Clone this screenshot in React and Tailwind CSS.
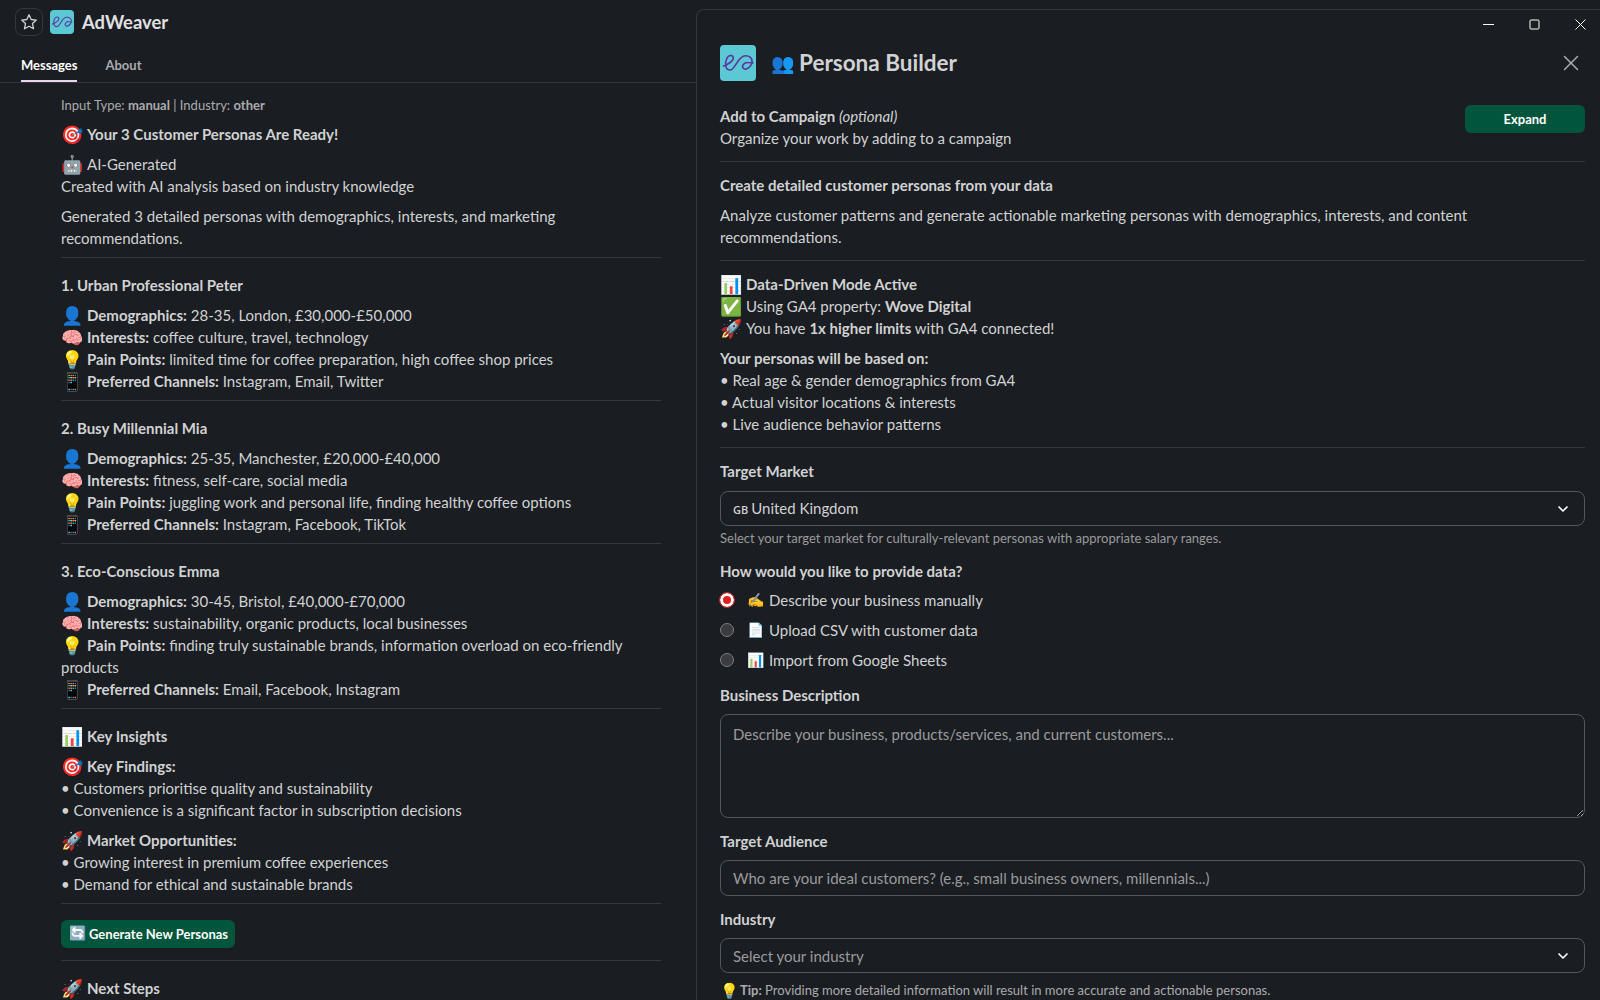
import React from 'react';
import { X, ChevronDown } from 'lucide-react';

function Logo({ className }) {
    return (
        <div className={`bg-[#5cc8d4] flex items-center justify-center shrink-0 ${className}`}>
            <svg viewBox="0 0 36 36" className="w-full h-full" fill="none" stroke="#5a35a0" strokeWidth="1.6" strokeLinecap="round">
                <path d="M3.500 21C7 20 13.500 16 13.300 13C13 10 9 9.500 7 13C5 17 4.500 25 10 25C15 25 17 13 24 11C29 10 32.500 13 32 17C31.500 22 26 25.500 23.500 23.500C21 21.500 24 17 28 17.500L33 18" />
            </svg>
        </div>
    );
}

function Emoji({ children }) {
    return <span className="inline-block w-[26px] h-[22px] align-top text-[18px] leading-[22px]">{children}</span>;
}

function Divider({ className = 'mt-2 mb-4' }) {
    return <div className={`h-px bg-[#35373b] ${className}`} />;
}

function Persona({ title, demographics, interests, pain, channels }) {
    return (
        <div>
            <p className="font-bold mb-2">{title}</p>
            <p><Emoji>👤</Emoji><b>Demographics:</b> {demographics}</p>
            <p><Emoji>🧠</Emoji><b>Interests:</b> {interests}</p>
            <p><Emoji>💡</Emoji><b>Pain Points:</b> {pain}</p>
            <p><Emoji>📱</Emoji><b>Preferred Channels:</b> {channels}</p>
            <Divider />
        </div>
    );
}

const personas = [
    {
        title: '1. Urban Professional Peter',
        demographics: '28-35, London, £30,000-£50,000',
        interests: 'coffee culture, travel, technology',
        pain: 'limited time for coffee preparation, high coffee shop prices',
        channels: 'Instagram, Email, Twitter',
    },
    {
        title: '2. Busy Millennial Mia',
        demographics: '25-35, Manchester, £20,000-£40,000',
        interests: 'fitness, self-care, social media',
        pain: 'juggling work and personal life, finding healthy coffee options',
        channels: 'Instagram, Facebook, TikTok',
    },
    {
        title: '3. Eco-Conscious Emma',
        demographics: '30-45, Bristol, £40,000-£70,000',
        interests: 'sustainability, organic products, local businesses',
        pain: 'finding truly sustainable brands, information overload on eco-friendly products',
        channels: 'Email, Facebook, Instagram',
    },
];

function Messages() {
    return (
        <div className="w-[696px] shrink-0 flex flex-col">
            {/* Header */}
            <div className="h-[44px] shrink-0 flex items-center pl-[15px]">
                <button className="w-[28px] h-[28px] rounded-lg border border-[#35373b] flex items-center justify-center text-[#d1d2d3]">
                    <Star />
                </button>
                <Logo className="w-[24px] h-[24px] rounded ml-[7px]" />
                <span className="ml-2 text-[18.4px] font-bold text-[#e0e0e1]">AdWeaver</span>
            </div>
            <div className="h-[39px] shrink-0 flex items-end gap-7 pl-[21px] border-b border-[#35373b] text-[13px] font-bold">
                <div className="h-[39px] flex items-center pt-[7px] text-white border-b-2 border-[#e8d5ee]">Messages</div>
                <div className="h-[39px] flex items-center pt-[5px] text-[#ababad]">About</div>
            </div>

            {/* Message body */}
            <div className="pl-[61px] pr-[35px] pt-[12px]">
                <p className="text-[13px] leading-[20px] text-[#ababad] mb-[8px]">Input Type: <b>manual</b> | Industry: <b>other</b></p>
                <p className="font-bold mb-2"><Emoji>🎯</Emoji>Your 3 Customer Personas Are Ready!</p>
                <p><Emoji>🤖</Emoji>AI-Generated</p>
                <p className="mb-2">Created with AI analysis based on industry knowledge</p>
                <p>Generated 3 detailed personas with demographics, interests, and marketing recommendations.</p>
                <Divider />
                {personas.map((p) => <Persona key={p.title} {...p} />)}
                <p className="font-bold mb-2"><Emoji>📊</Emoji>Key Insights</p>
                <p className="font-bold"><Emoji>🎯</Emoji>Key Findings:</p>
                <p>• Customers prioritise quality and sustainability</p>
                <p className="mb-2">• Convenience is a significant factor in subscription decisions</p>
                <p className="font-bold"><Emoji>🚀</Emoji>Market Opportunities:</p>
                <p>• Growing interest in premium coffee experiences</p>
                <p>• Demand for ethical and sustainable brands</p>
                <Divider />
                <button className="block h-[28px] pl-2 pr-[7px] rounded-md bg-[#00553d] text-white text-[13px] font-bold">
                    <span className="inline-block w-[20px] text-left text-[14px] leading-[20px] align-top">🔄</span>Generate New Personas
                </button>
                <Divider className="mt-3 mb-4" />
                <p className="font-bold"><Emoji>🚀</Emoji>Next Steps</p>
            </div>
        </div>
    );
}

function Star() {
    return (
        <svg width="18" height="18" viewBox="0 0 18 18" fill="none" stroke="currentColor" strokeWidth="1.3" strokeLinejoin="round">
            <path d="M9 1.800l2.200 4.700 5.100.6-3.800 3.500 1 5.100L9 13.200l-4.500 2.500 1-5.100-3.800-3.500 5.100-.6z" />
        </svg>
    );
}

function Field({ label, children, className = '' }) {
    return (
        <div className={className}>
            <p className="font-bold mb-2">{label}</p>
            {children}
        </div>
    );
}

function SelectBox({ children, className = '' }) {
    return (
        <div className={`h-[35px] rounded-lg border border-[#55575b] flex items-center justify-between pl-3 pr-[13px] ${className}`}>
            <span>{children}</span>
            <ChevronDown size={16} strokeWidth={2.5} className="text-white" />
        </div>
    );
}

function Radio({ checked, emoji, label }) {
    return (
        <div className="h-[30px] flex items-center">
            {checked ? (
                <span className="w-[14px] h-[14px] rounded-full border-[3px] border-white bg-[#e01e1e] outline outline-1 outline-[#e01e1e]" />
            ) : (
                <span className="w-[14px] h-[14px] rounded-full border border-[#7c7e81] bg-[#3a3c40]" />
            )}
            <span className="ml-[13px] w-[22px] text-[14px]">{emoji}</span>
            <span>{label}</span>
        </div>
    );
}

function WindowControls() {
    return (
        <div className="absolute top-[9px] right-[14px] flex items-center gap-[35px] text-white">
            <svg width="11" height="11" viewBox="0 0 11 11" stroke="currentColor" fill="none"><path d="M0 5.500h11" /></svg>
            <svg width="11" height="11" viewBox="0 0 11 11" stroke="currentColor" fill="none"><rect x="1" y="1" width="9" height="9" rx="1" /></svg>
            <svg width="11" height="11" viewBox="0 0 11 11" stroke="currentColor" fill="none"><path d="M.5 .5l10 10M10.500 .5l-10 10" /></svg>
        </div>
    );
}

function PersonaBuilder() {
    return (
        <div className="flex-1 mt-[9px] rounded-tl-lg border-l border-t border-[#35373b] pl-[23px] pr-[15px] relative">
            <WindowControls />

            {/* Title */}
            <div className="h-[36px] mt-[35px] flex items-center">
                <Logo className="w-[36px] h-[36px] rounded-[4px]" />
                <h1 className="ml-[15px] text-[22.5px] font-bold text-[#d1d2d3] flex items-center">
                    <span className="w-[28px] text-[19px]">👥</span>Persona Builder
                </h1>
                <X size={26} absoluteStrokeWidth strokeWidth={1.5} className="ml-auto mr-[1px] text-[#ababad]" />
            </div>

            {/* Campaign */}
            <div className="mt-[24px] flex justify-between items-start">
                <div>
                    <p><b>Add to Campaign</b> <i>(optional)</i></p>
                    <p>Organize your work by adding to a campaign</p>
                </div>
                <button className="w-[120px] h-[28px] rounded-md bg-[#00553d] text-white text-[13px] font-bold">Expand</button>
            </div>
            <Divider className="mt-3 mb-3" />

            <p className="font-bold mb-2">Create detailed customer personas from your data</p>
            <p>Analyze customer patterns and generate actionable marketing personas with demographics, interests, and content recommendations.</p>
            <Divider className="mt-3 mb-3" />

            <p className="font-bold"><Emoji>📊</Emoji>Data-Driven Mode Active</p>
            <p><Emoji>✅</Emoji>Using GA4 property: <b>Wove Digital</b></p>
            <p className="mb-2"><Emoji>🚀</Emoji>You have <b>1x higher limits</b> with GA4 connected!</p>
            <p className="font-bold">Your personas will be based on:</p>
            <p>• Real age &amp; gender demographics from GA4</p>
            <p>• Actual visitor locations &amp; interests</p>
            <p>• Live audience behavior patterns</p>
            <Divider className="mt-3 mb-3" />

            <Field label="Target Market">
                <SelectBox className="mt-[9px]"><span className="text-[11px] font-semibold font-['Open_Sans',sans-serif] mr-[3px]">GB</span>United Kingdom</SelectBox>
                <p className="text-[13px] leading-[20px] text-[#9a9b9d] mt-[2px]">Select your target market for culturally-relevant personas with appropriate salary ranges.</p>
            </Field>

            <div className="mt-[12px]">
                <p className="font-bold mb-[3px]">How would you like to provide data?</p>
                <Radio checked emoji="✍️" label="Describe your business manually" />
                <Radio emoji="📄" label="Upload CSV with customer data" />
                <Radio emoji="📊" label="Import from Google Sheets" />
            </div>

            <Field label="Business Description" className="mt-[9px]">
                <textarea
                    className="block w-full h-[104px] rounded-lg border border-[#55575b] bg-transparent px-3 py-[8px] placeholder:text-[#9a9b9d] outline-none"
                    placeholder="Describe your business, products/services, and current customers..."
                />
            </Field>

            <Field label="Target Audience" className="mt-[12px]">
                <input
                    className="block w-full h-[36px] rounded-lg border border-[#55575b] bg-transparent px-3 placeholder:text-[#9a9b9d] outline-none"
                    placeholder="Who are your ideal customers? (e.g., small business owners, millennials...)"
                />
            </Field>

            <Field label="Industry" className="mt-[12px]">
                <SelectBox><span className="text-[#9a9b9d]">Select your industry</span></SelectBox>
            </Field>
            <p className="text-[13px] leading-[20px] text-[#ababad] mt-[7px]"><span className="inline-block w-[20px] text-[15px] leading-[20px] align-top">💡</span><b>Tip:</b> Providing more detailed information will result in more accurate and actionable personas.</p>
        </div>
    );
}

export default function App() {
    return (
        <div className="h-screen overflow-hidden flex bg-[#1a1d21] text-[#d1d2d3] text-[15px] leading-[22px] font-['Lato',sans-serif]">
            <Messages />
            <PersonaBuilder />
        </div>
    );
}
